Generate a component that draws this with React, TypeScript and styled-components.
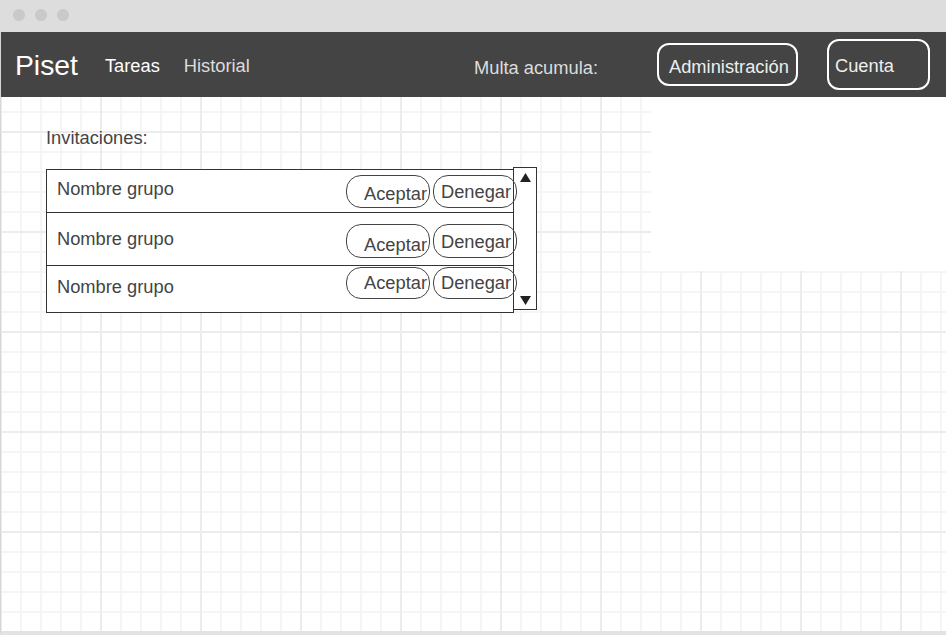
import React from "react";
import styled, { createGlobalStyle } from "styled-components";

const Global = createGlobalStyle`
  html, body { margin: 0; padding: 0; background: #fff; }
  body { font-family: "Liberation Sans", Arial, sans-serif; }
  * { box-sizing: border-box; }
`;

const Window = styled.div`
  width: 946px;
  height: 635px;
  display: flex;
  flex-direction: column;
  overflow: hidden;
  background: #fff;
`;

const TitleBar = styled.div`
  height: 32px;
  flex: none;
  background: #dddddd;
  display: flex;
  align-items: center;
  gap: 10px;
  padding: 0 0 2px 13px;
`;

const Dot = styled.span`
  width: 12px;
  height: 12px;
  border-radius: 50%;
  background: #c9c9c9;
`;

const Frame = styled.div`
  flex: 1;
  display: flex;
  flex-direction: column;
  border-left: 1px solid #d6d6d6;
  border-bottom: 4px solid #e3e3e3;
  min-height: 0;
`;

const Header = styled.header`
  height: 65px;
  flex: none;
  background: #444444;
  display: flex;
  align-items: center;
  padding: 0 16px 0 14px;
  white-space: nowrap;
`;

const Brand = styled.div`
  font-size: 28.3px;
  color: #ffffff;
  margin-top: 2px;
`;

const NavLink = styled.div<{ $active?: boolean; $gap: number }>`
  font-size: 18.3px;
  margin-left: ${(p) => p.$gap}px;
  margin-top: 2px;
  color: ${(p) => (p.$active ? "#ffffff" : "#dddddd")};
`;

const Fine = styled.div`
  margin-left: auto;
  font-size: 18.3px;
  color: #dddddd;
  margin-top: 6px;
`;

const HeaderButton = styled.div<{ $w: number; $h: number; $gap: number; $padL: number; $padT: number }>`
  width: ${(p) => p.$w}px;
  height: ${(p) => p.$h}px;
  margin-left: ${(p) => p.$gap}px;
  border: 2px solid #ffffff;
  border-radius: 12px;
  display: flex;
  align-items: center;
  padding: ${(p) => p.$padT}px 0 0 ${(p) => p.$padL}px;
  font-size: 18.3px;
  color: #eeeeee;
`;

const Canvas = styled.main`
  flex: 1;
  min-height: 0;
  background-color: #ffffff;
  background-image:
    linear-gradient(to right, #ececec 2px, transparent 2px),
    linear-gradient(to bottom, #ececec 2px, transparent 2px),
    linear-gradient(to right, #f5f5f5 2px, transparent 2px),
    linear-gradient(to bottom, #f5f5f5 2px, transparent 2px);
  background-size: 100px 100px, 100px 100px, 20px 20px, 20px 20px;
  background-position: 99px 0, 0 34px, 19px 0, 0 14px;
`;

const TopArea = styled.div`
  display: flex;
  align-items: flex-start;
`;

const Content = styled.section`
  padding: 30px 0 0 45px;
`;

const WhitePanel = styled.div`
  margin-left: auto;
  width: 295px;
  height: 174px;
  background: #ffffff;
  flex: none;
`;

const Label = styled.div`
  font-size: 18.3px;
  color: #444444;
`;

const ListArea = styled.div`
  display: flex;
  align-items: flex-start;
  margin-top: 18px;
`;

const ListBox = styled.div`
  width: 468px;
  margin-top: 2px;
  border: 1px solid #333333;
  background: #ffffff;
`;

const Row = styled.div<{ $h: number; $last?: boolean }>`
  height: ${(p) => p.$h}px;
  display: flex;
  align-items: flex-start;
  padding-left: 10px;
  border-bottom: ${(p) => (p.$last ? "none" : "1px solid #333333")};
`;

const GroupName = styled.div<{ $top: number }>`
  font-size: 18.3px;
  color: #444444;
  margin-top: ${(p) => p.$top}px;
`;

const Actions = styled.div<{ $top: number }>`
  margin-left: auto;
  margin-right: -4px;
  margin-top: ${(p) => p.$top}px;
  display: flex;
  gap: 3px;
  position: relative;
  z-index: 1;
`;

const PillButton = styled.div<{ $h: number; $padT: number; $padL: number }>`
  width: 84px;
  height: ${(p) => p.$h}px;
  border: 1px solid #444444;
  border-radius: 15px;
  padding: ${(p) => p.$padT}px 0 0 ${(p) => p.$padL}px;
  font-size: 18.3px;
  color: #444444;
  white-space: nowrap;
`;

const ScrollBar = styled.div`
  width: 24px;
  height: 143px;
  margin-left: -1px;
  border: 1px solid #333333;
  background: #ffffff;
  display: flex;
  flex-direction: column;
  justify-content: space-between;
  align-items: center;
  padding: 5px 0 4px;
`;

const Arrow = ({ down }: { down?: boolean }) => (
  <svg width="11" height="9" viewBox="0 0 11 9">
    <polygon points={down ? "0,0 11,0 5.5,9" : "5.5,0 11,9 0,9"} fill="#222" />
  </svg>
);

const rows = [
  { h: 43, nameTop: 8, btnTop: 5, btnH: 33, acceptT: 7, denyT: 5 },
  { h: 53, nameTop: 15, btnTop: 11, btnH: 34, acceptT: 9, denyT: 6 },
  { h: 46, nameTop: 10, btnTop: 1, btnH: 32, acceptT: 4, denyT: 4 },
];

export default function App() {
  return (
    <>
      <Global />
      <Window>
        <TitleBar>
          <Dot />
          <Dot />
          <Dot />
        </TitleBar>
        <Frame>
          <Header>
            <Brand>Piset</Brand>
            <NavLink $active $gap={27}>Tareas</NavLink>
            <NavLink $gap={24}>Historial</NavLink>
            <Fine>Multa acumula:</Fine>
            <HeaderButton $w={141} $h={43} $gap={59} $padL={10} $padT={5}>
              Administración
            </HeaderButton>
            <HeaderButton $w={103} $h={51} $gap={29} $padL={6} $padT={2}>
              Cuenta
            </HeaderButton>
          </Header>
          <Canvas>
            <TopArea>
              <Content>
                <Label>Invitaciones:</Label>
                <ListArea>
                  <ListBox>
                    {rows.map((r, i) => (
                      <Row key={i} $h={r.h} $last={i === rows.length - 1}>
                        <GroupName $top={r.nameTop}>Nombre grupo</GroupName>
                        <Actions $top={r.btnTop}>
                          <PillButton $h={r.btnH} $padT={r.acceptT} $padL={17}>
                            Aceptar
                          </PillButton>
                          <PillButton $h={r.btnH} $padT={r.denyT} $padL={7}>
                            Denegar
                          </PillButton>
                        </Actions>
                      </Row>
                    ))}
                  </ListBox>
                  <ScrollBar>
                    <Arrow />
                    <Arrow down />
                  </ScrollBar>
                </ListArea>
              </Content>
              <WhitePanel />
            </TopArea>
          </Canvas>
        </Frame>
      </Window>
    </>
  );
}
